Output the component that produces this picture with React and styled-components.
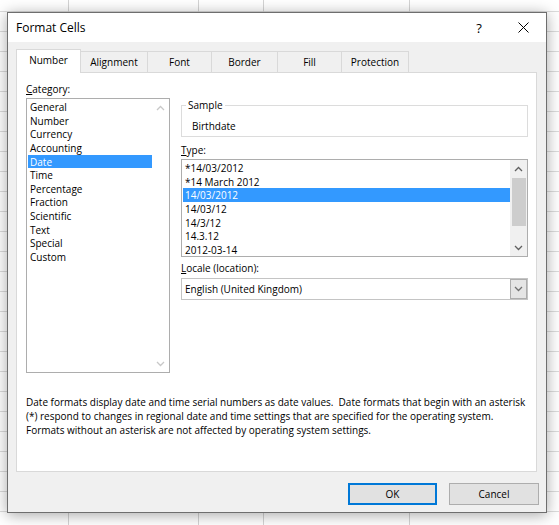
import React from "react";
import styled, { createGlobalStyle } from "styled-components";

const GlobalStyle = createGlobalStyle`
  body {
    margin: 0;
    background: #fff;
    font-family: "Open Sans", "Noto Sans", sans-serif;
    color: #000;
  }
`;

const categories = [
  "General",
  "Number",
  "Currency",
  "Accounting",
  "Date",
  "Time",
  "Percentage",
  "Fraction",
  "Scientific",
  "Text",
  "Special",
  "Custom",
];

const types = [
  "*14/03/2012",
  "*14 March 2012",
  "14/03/2012",
  "14/03/12",
  "14/3/12",
  "14.3.12",
  "2012-03-14",
];

const tabs = [
  { label: "Number", width: 65 },
  { label: "Alignment", width: 67 },
  { label: "Font", width: 64 },
  { label: "Border", width: 66 },
  { label: "Fill", width: 64 },
  { label: "Protection", width: 67 },
];

const Page = styled.div`
  width: 559px;
  height: 525px;
  box-sizing: border-box;
  padding: 12px 0 0 7px;
  overflow: hidden;
  background-color: #fff;
  background-image: linear-gradient(
      to right,
      transparent 68px,
      #d4d4d4 68px 69px,
      transparent 69px 198px,
      #d4d4d4 198px 199px,
      transparent 199px 263px,
      #d4d4d4 263px 264px,
      transparent 264px 409px,
      #d4d4d4 409px 410px,
      transparent 410px
    ),
    repeating-linear-gradient(
      to bottom,
      transparent 0 11px,
      #dcdcdc 11px 12px,
      transparent 12px 20px
    );
`;

const Dialog = styled.div`
  width: 540px;
  height: 501px;
  box-sizing: border-box;
  border: 1px solid #6e6e6e;
  background: #f0f0f0;
  box-shadow: 0 2px 14px rgba(0, 0, 0, 0.35);
  display: flex;
  flex-direction: column;
`;

const TitleBar = styled.div`
  height: 29px;
  background: #fff;
  display: flex;
  align-items: center;
  padding-left: 8px;
  font-size: 12px;
`;

const TitleText = styled.div`
  flex: 1;
`;

const HelpButton = styled.div`
  width: 30px;
  text-align: center;
  font-size: 13px;
  margin-right: 14px;
`;

const CloseButton = styled.div`
  width: 30px;
  display: flex;
  justify-content: center;
  margin-right: 8px;
`;

const Body = styled.div`
  padding: 7px 9px 0 8px;
`;

const TabRow = styled.div`
  display: flex;
  align-items: flex-end;
  height: 23px;
`;

const Tab = styled.div`
  box-sizing: border-box;
  width: ${({ $w }) => $w}px;
  height: ${({ $active }) => ($active ? 24 : 21)}px;
  margin-bottom: ${({ $active }) => ($active ? -1 : 0)}px;
  position: relative;
  z-index: ${({ $active }) => ($active ? 1 : 0)};
  background: ${({ $active }) => ($active ? "#fff" : "#f0f0f0")};
  border: 1px solid #d9d9d9;
  border-left: ${({ $active }) => ($active ? "1px solid #d9d9d9" : "none")};
  border-bottom: none;
  font-size: 10px;
  display: flex;
  align-items: center;
  justify-content: center;
  padding-bottom: ${({ $active }) => ($active ? 3 : 0)}px;
`;

const Panel = styled.div`
  box-sizing: border-box;
  width: 521px;
  height: 400px;
  background: #fff;
  border: 1px solid #d9d9d9;
  padding: 9px 8px 0 9px;
  display: grid;
  grid-template-columns: 144px 347px;
  column-gap: 11px;
  align-content: start;
  font-size: 10px;
`;

const Column = styled.div`
  display: flex;
  flex-direction: column;
`;

const Label = styled.div`
  height: 14px;
  line-height: 14px;
  margin-top: ${({ $mt }) => $mt || 0}px;
`;

const ListBox = styled.div`
  box-sizing: border-box;
  height: ${({ $h }) => $h}px;
  margin-top: 2px;
  border: 1px solid #adadad;
  background: #fff;
  display: flex;
`;

const Items = styled.div`
  flex: 1;
  padding: 1px 0 0 1px;
`;

const Item = styled.div`
  height: 13.65px;
  line-height: 14.5px;
  padding-left: 2px;
  background: ${({ $sel }) => ($sel ? "#3399ff" : "transparent")};
  color: ${({ $sel }) => ($sel ? "#fff" : "#000")};
  white-space: nowrap;
`;

const ScrollBar = styled.div`
  width: 17px;
  display: flex;
  flex-direction: column;
  align-items: center;
  background: ${({ $bg }) => $bg};
`;

const ArrowBox = styled.div`
  height: 17px;
  width: 17px;
  display: flex;
  align-items: center;
  justify-content: center;
`;

const Track = styled.div`
  flex: 1;
  width: 100%;
  display: flex;
  flex-direction: column;
  align-items: center;
`;

const Thumb = styled.div`
  margin-top: 1px;
  width: 14px;
  height: 48px;
  background: #cdcdcd;
`;

const SampleBox = styled.fieldset`
  margin: 16px 0 0 0;
  padding: 0 10px 3px 10px;
  border: 1px solid #dcdcdc;
  min-width: 0;
`;

const Legend = styled.legend`
  padding: 0 2px;
  margin-left: -6px;
  line-height: 14px;
  font-size: 10px;
`;

const SampleValue = styled.div`
  margin-top: 7px;
  line-height: 14px;
`;

const Combo = styled.div`
  box-sizing: border-box;
  height: 22px;
  margin-top: 3px;
  border: 1px solid #c4c4c4;
  background: #fff;
  display: flex;
  align-items: center;
`;

const ComboText = styled.div`
  flex: 1;
  padding-left: 3px;
`;

const ComboButton = styled.div`
  box-sizing: border-box;
  width: 17px;
  height: 20px;
  background: #e5e5e5;
  border: 1px solid #adadad;
  display: flex;
  align-items: center;
  justify-content: center;
`;

const Description = styled.div`
  grid-column: 1 / -1;
  margin-top: 22px;
  line-height: 14px;
`;

const Footer = styled.div`
  display: flex;
  justify-content: flex-end;
  gap: 12px;
  padding: 11px 7px 0 0;
`;

const Button = styled.div`
  box-sizing: border-box;
  width: ${({ $w }) => $w}px;
  height: 22px;
  background: #e1e1e1;
  border: 1px solid ${({ $focus }) => ($focus ? "#0078d7" : "#adadad")};
  box-shadow: ${({ $focus }) => ($focus ? "inset 0 0 0 1px #0078d7" : "none")};
  font-size: 10px;
  display: flex;
  align-items: center;
  justify-content: center;
`;

const Chevron = ({ up, color }) => (
  <svg width="9" height="6" viewBox="0 0 9 6">
    <polyline
      points={up ? "1,5 4.5,1.5 8,5" : "1,1 4.5,4.5 8,1"}
      fill="none"
      stroke={color}
      strokeWidth="1.3"
    />
  </svg>
);

const App = () => {
  return (
    <Page>
      <GlobalStyle />
      <Dialog>
        <TitleBar>
          <TitleText>Format Cells</TitleText>
          <HelpButton>?</HelpButton>
          <CloseButton>
            <svg width="11" height="11" viewBox="0 0 11 11">
              <path d="M0.5 0.5 L10.5 10.5 M10.5 0.5 L0.5 10.5" stroke="#000" strokeWidth="1" />
            </svg>
          </CloseButton>
        </TitleBar>
        <Body>
          <TabRow>
            {tabs.map((t, i) => (
              <Tab key={t.label} $w={t.width} $active={i === 0}>
                {t.label}
              </Tab>
            ))}
          </TabRow>
          <Panel>
            <Column>
              <Label>
                <u>C</u>ategory:
              </Label>
              <ListBox $h={275}>
                <Items>
                  {categories.map((c) => (
                    <Item key={c} $sel={c === "Date"}>
                      {c}
                    </Item>
                  ))}
                </Items>
                <ScrollBar $bg="#fff">
                  <ArrowBox>
                    <Chevron up color="#c8c8c8" />
                  </ArrowBox>
                  <Track />
                  <ArrowBox>
                    <Chevron color="#c8c8c8" />
                  </ArrowBox>
                </ScrollBar>
              </ListBox>
            </Column>
            <Column>
              <SampleBox>
                <Legend>Sample</Legend>
                <SampleValue>Birthdate</SampleValue>
              </SampleBox>
              <Label $mt={6}>
                <u>T</u>ype:
              </Label>
              <ListBox $h={98}>
                <Items>
                  {types.map((t, i) => (
                    <Item key={t} $sel={i === 2}>
                      {t}
                    </Item>
                  ))}
                </Items>
                <ScrollBar $bg="#f0f0f0">
                  <ArrowBox>
                    <Chevron up color="#606060" />
                  </ArrowBox>
                  <Track>
                    <Thumb />
                  </Track>
                  <ArrowBox>
                    <Chevron color="#606060" />
                  </ArrowBox>
                </ScrollBar>
              </ListBox>
              <Label $mt={4}>
                <u>L</u>ocale (location):
              </Label>
              <Combo>
                <ComboText>English (United Kingdom)</ComboText>
                <ComboButton>
                  <Chevron color="#707070" />
                </ComboButton>
              </Combo>
            </Column>
            <Description>
              Date formats display date and time serial numbers as date values.&nbsp; Date formats that begin
              with an asterisk (*) respond to changes in regional date and time settings that are specified for
              the operating system. Formats without an asterisk are not affected by operating system settings.
            </Description>
          </Panel>
        </Body>
        <Footer>
          <Button $w={89} $focus>
            OK
          </Button>
          <Button $w={90}>Cancel</Button>
        </Footer>
      </Dialog>
    </Page>
  );
};

export default App;
